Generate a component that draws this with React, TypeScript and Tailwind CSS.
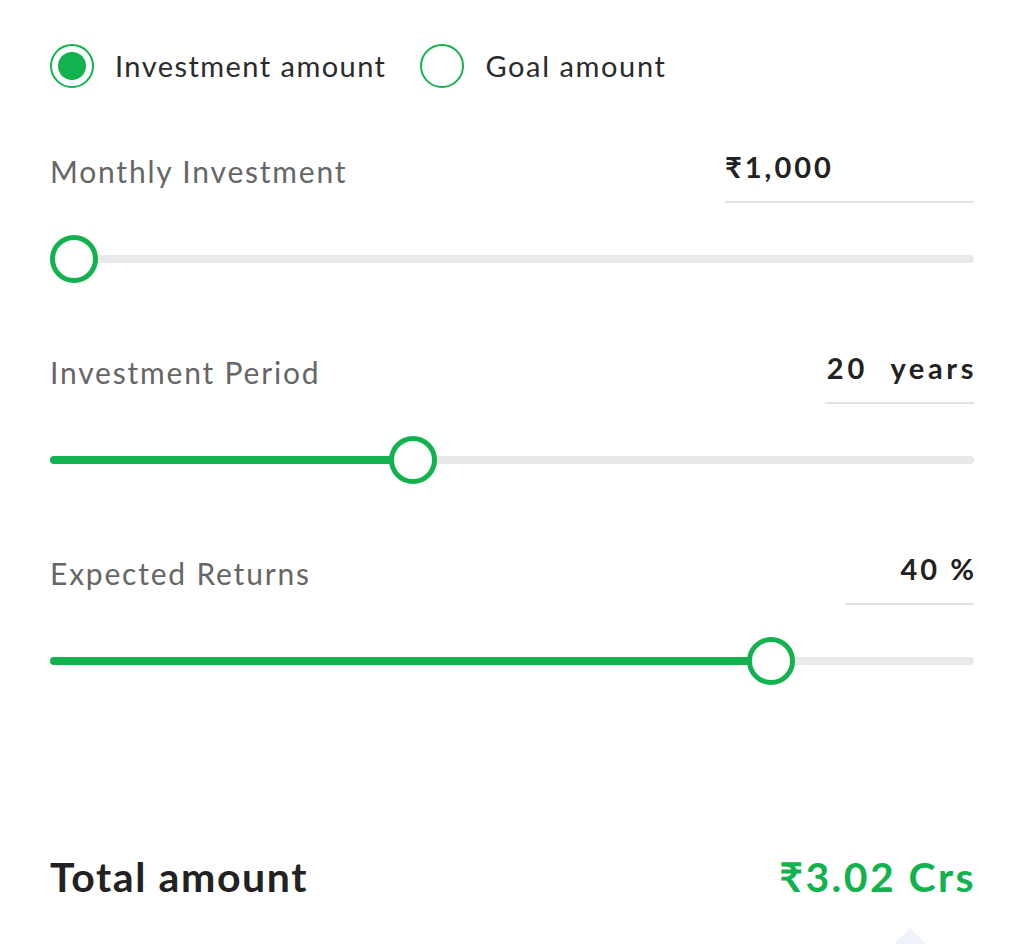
import React from "react";

function Slider({ frac }: { frac: number }) {
  const center = 24 + frac * (924 - 48);
  return (
    <div className="relative h-[48px] w-full">
      <div className="absolute left-0 right-0 top-[20px] h-[8px] rounded-full bg-[#e9e9e9]" />
      {frac > 0 && (
        <div
          className="absolute left-0 top-[20px] h-[8px] rounded-full bg-[#12b24f]"
          style={{ width: center }}
        />
      )}
      <div
        className="absolute top-0 h-[48px] w-[48px] rounded-full border-[5px] border-[#12b24f] bg-white"
        style={{ left: center - 24 }}
      />
    </div>
  );
}

function Section({
  label,
  value,
  boxW,
  align,
  frac,
  mt,
}: {
  label: string;
  value: React.ReactNode;
  boxW: string;
  align: "left" | "right";
  frac: number;
  mt: string;
}) {
  return (
    <div className={mt}>
      <div className="flex items-start justify-between">
        <div className="mt-[4px] text-[30px] leading-[36px] tracking-[1.8px] text-[#666666]">{label}</div>
        <div
          className={`${boxW} border-b-[2px] border-[#e3e3e3] pb-[16px] text-[29px] font-bold leading-[36px] tracking-[3px] text-[#222222] ${
            align === "right" ? "text-right" : "text-left"
          }`}
        >
          {value}
        </div>
      </div>
      <div className="mt-[32px]">
        <Slider frac={frac} />
      </div>
    </div>
  );
}

export default function App() {
  return (
    <div
      className="relative h-[944px] w-[1024px] overflow-hidden bg-white px-[50px]"
      style={{ fontFamily: "Lato, 'Noto Sans', sans-serif" }}
    >
      <div className="flex items-center pt-[44px]">
        <div className="flex items-center">
          <div className="flex h-[44px] w-[44px] items-center justify-center rounded-full border-[2px] border-[#12b24f]">
            <div className="h-[28px] w-[28px] rounded-full bg-[#12b24f]" />
          </div>
          <span className="ml-[21px] text-[29px] leading-[36px] tracking-[1.45px] text-[#2b2b2b]">Investment amount</span>
        </div>
        <div className="ml-[34px] flex items-center">
          <div className="h-[44px] w-[44px] rounded-full border-[2px] border-[#12b24f]" />
          <span className="ml-[21px] text-[29px] leading-[36px] tracking-[1.6px] text-[#2b2b2b]">Goal amount</span>
        </div>
      </div>

      <Section
        mt="mt-[61px]"
        label="Monthly Investment"
        value="₹1,000"
        boxW="w-[249px]"
        align="left"
        frac={0}
      />
      <Section
        mt="mt-[67px]"
        label="Investment Period"
        value={
          <span className="mr-[-3px]">
            <span className="tracking-[4px]">20</span>
            <span className="ml-[22px] tracking-[3.6px]">years</span>
          </span>
        }
        boxW="w-[149px]"
        align="right"
        frac={0.387}
      />
      <Section
        mt="mt-[67px]"
        label="Expected Returns"
        value={<span className="mr-[-3px]">40 %</span>}
        boxW="w-[129px]"
        align="right"
        frac={0.796}
      />

      <div className="mt-[168px] flex items-center justify-between">
        <div className="text-[41px] font-bold leading-[48px] tracking-[1.6px] text-[#222222]">Total amount</div>
        <div className="mr-[-2px] text-[41px] font-bold leading-[48px] tracking-[2.4px] text-[#12b24f]">₹3.02 Crs</div>
      </div>

      <div className="absolute left-[886px] top-[928px] h-0 w-0 border-b-[24px] border-l-[24px] border-r-[24px] border-b-[#eef2fb] border-l-transparent border-r-transparent" />
    </div>
  );
}
